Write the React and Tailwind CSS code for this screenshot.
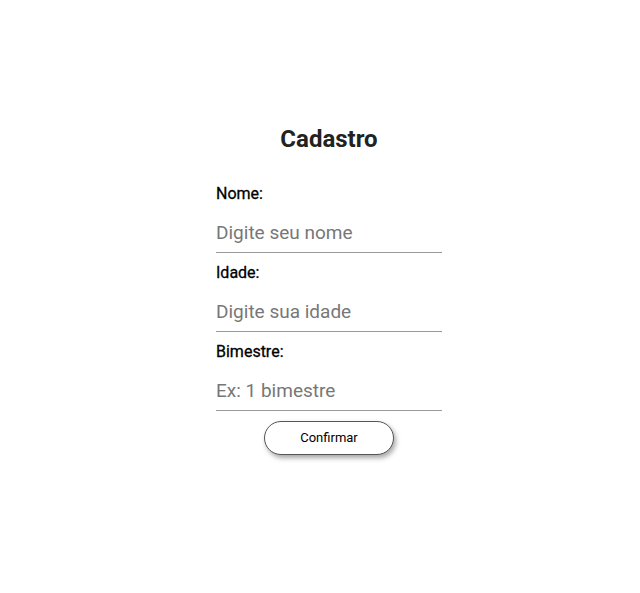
export default function App() {
  const fields = [
    { label: "Nome:", ph: "Digite seu nome" },
    { label: "Idade:", ph: "Digite sua idade" },
    { label: "Bimestre:", ph: "Ex: 1 bimestre" },
  ];
  return (
    <div className="min-h-[593px] bg-white pt-[124px] pl-[18px] flex flex-col items-center" style={{ fontFamily: "Roboto, sans-serif" }}>
      <h1 className="text-[24px] leading-[30px] font-bold text-[#222]">Cadastro</h1>
      <form className="w-[226px] mt-[28px] flex flex-col" onSubmit={(e) => e.preventDefault()}>
        {fields.map((f, i) => (
          <div key={i} className={i > 0 ? "mt-[8px] flex flex-col" : "flex flex-col"}>
            <label className="text-[16px] leading-[24px] text-black [-webkit-text-stroke:0.3px_black]">{f.label}</label>
            <input
              type="text"
              placeholder={f.ph}
              className="h-[47px] pt-[6px] text-[19px] border-b border-[#999] outline-none placeholder:text-[#777] text-black"
            />
          </div>
        ))}
        <button
          type="submit"
          className="self-center mt-[10px] w-[130px] h-[34px] rounded-full border border-[#555] bg-white text-[13px] text-black shadow-[2px_3px_5px_rgba(0,0,0,0.35)]"
        >
          Confirmar
        </button>
      </form>
    </div>
  );
}
